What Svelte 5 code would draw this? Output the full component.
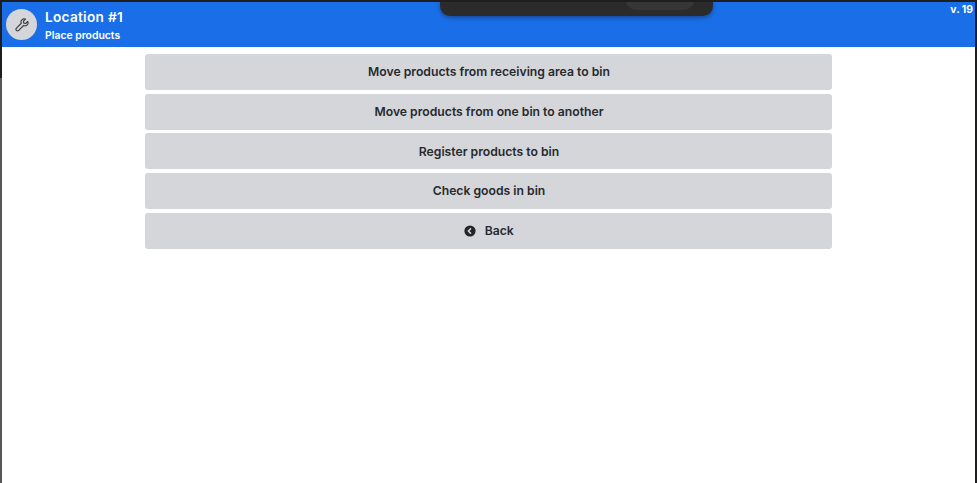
<script>
  const actions = [
    'Move products from receiving area to bin',
    'Move products from one bin to another',
    'Register products to bin',
    'Check goods in bin'
  ]
</script>

<div class="page">
  <header class="topbar">
    <div class="avatar">
      <svg width="14" height="14" viewBox="0 0 16 16" fill="none" stroke="#3a3d42" stroke-width="1.3" stroke-linejoin="round" stroke-linecap="round">
        <path d="M14.6 3.9 12.2 6.3 10 5.9 9.6 3.7 12 1.3C10.3.7 8.4 1.1 7.5 2.4 6.7 3.5 6.7 4.9 7.2 6L1.7 11.5C.9 12.3.9 13.4 1.6 14.1 2.4 14.9 3.5 14.9 4.3 14.1L9.8 8.6C11 9.2 12.4 9.1 13.5 8.3 14.8 7.4 15.2 5.5 14.6 3.9Z" />
      </svg>
    </div>
    <div class="titles">
      <div class="title">Location #1</div>
      <div class="subtitle">Place products</div>
    </div>
    <div class="version">v. 19</div>
  </header>

  <div class="notch">
    <div class="notch-pill"></div>
  </div>

  <main class="menu">
    {#each actions as label}
      <button class="action">{label}</button>
    {/each}
    <button class="action">
      <svg class="back-icon" width="12" height="12" viewBox="0 0 12 12">
        <circle cx="6" cy="6" r="5.6" fill="#212529" />
        <path d="M7 3.4 4.4 6 7 8.6" fill="none" stroke="#d5d6d9" stroke-width="1.5" />
      </svg>
      Back
    </button>
  </main>
</div>

<style>
  :global(body) {
    margin: 0;
    background: #fff;
  }

  .page {
    box-sizing: border-box;
    height: 483px;
    padding-left: 2px;
    border-top: 2px solid #1e1e20;
    border-right: 2px solid #1e1e20;
    background: linear-gradient(#1e1e20 76px, #55565a 76px) left top / 2px 100% no-repeat;
    font-family: Inter, "Liberation Sans", sans-serif;
    overflow: hidden;
    position: relative;
  }

  .topbar {
    display: flex;
    align-items: center;
    box-sizing: border-box;
    height: 45px;
    padding-left: 4px;
    background: #1a6fe8;
    color: #fff;
  }

  .avatar {
    display: flex;
    align-items: center;
    justify-content: center;
    width: 31px;
    height: 31px;
    border-radius: 50%;
    background: #d5d6da;
  }

  .titles {
    margin-left: 8px;
  }

  .title {
    font-size: 13.6px;
    font-weight: 600;
    letter-spacing: 0.3px;
    line-height: 17px;
    margin-top: 1px;
  }

  .subtitle {
    font-size: 10.4px;
    font-weight: 600;
    line-height: 13px;
    margin-top: 3px;
  }

  .version {
    align-self: flex-start;
    margin-left: auto;
    margin-top: 2px;
    margin-right: 2px;
    font-size: 10.4px;
    font-weight: 700;
    line-height: 12px;
  }

  .notch {
    position: absolute;
    top: -2px;
    left: 440px;
    width: 273px;
    height: 16px;
    background: #2b2b2c;
    border-radius: 0 0 10px 10px;
    box-shadow: 0 2px 4px rgba(20, 30, 60, 0.45);
  }

  .notch-pill {
    position: absolute;
    top: 0;
    left: 186px;
    width: 68px;
    height: 10px;
    background: #363637;
    border-radius: 0 0 14px 14px;
  }

  .menu {
    display: flex;
    flex-direction: column;
    gap: 3.6px;
    width: 687px;
    margin: 7.2px 0 0 143px;
  }

  .action {
    display: flex;
    align-items: center;
    justify-content: center;
    height: 36px;
    padding: 0.6px 0 0 1px;
    border: none;
    border-radius: 3px;
    background: #d5d6d9;
    color: #26292e;
    font-family: inherit;
    font-size: 12.2px;
    font-weight: 600;
    line-height: 36px;
  }

  .back-icon {
    margin-right: 8.5px;
  }
</style>
